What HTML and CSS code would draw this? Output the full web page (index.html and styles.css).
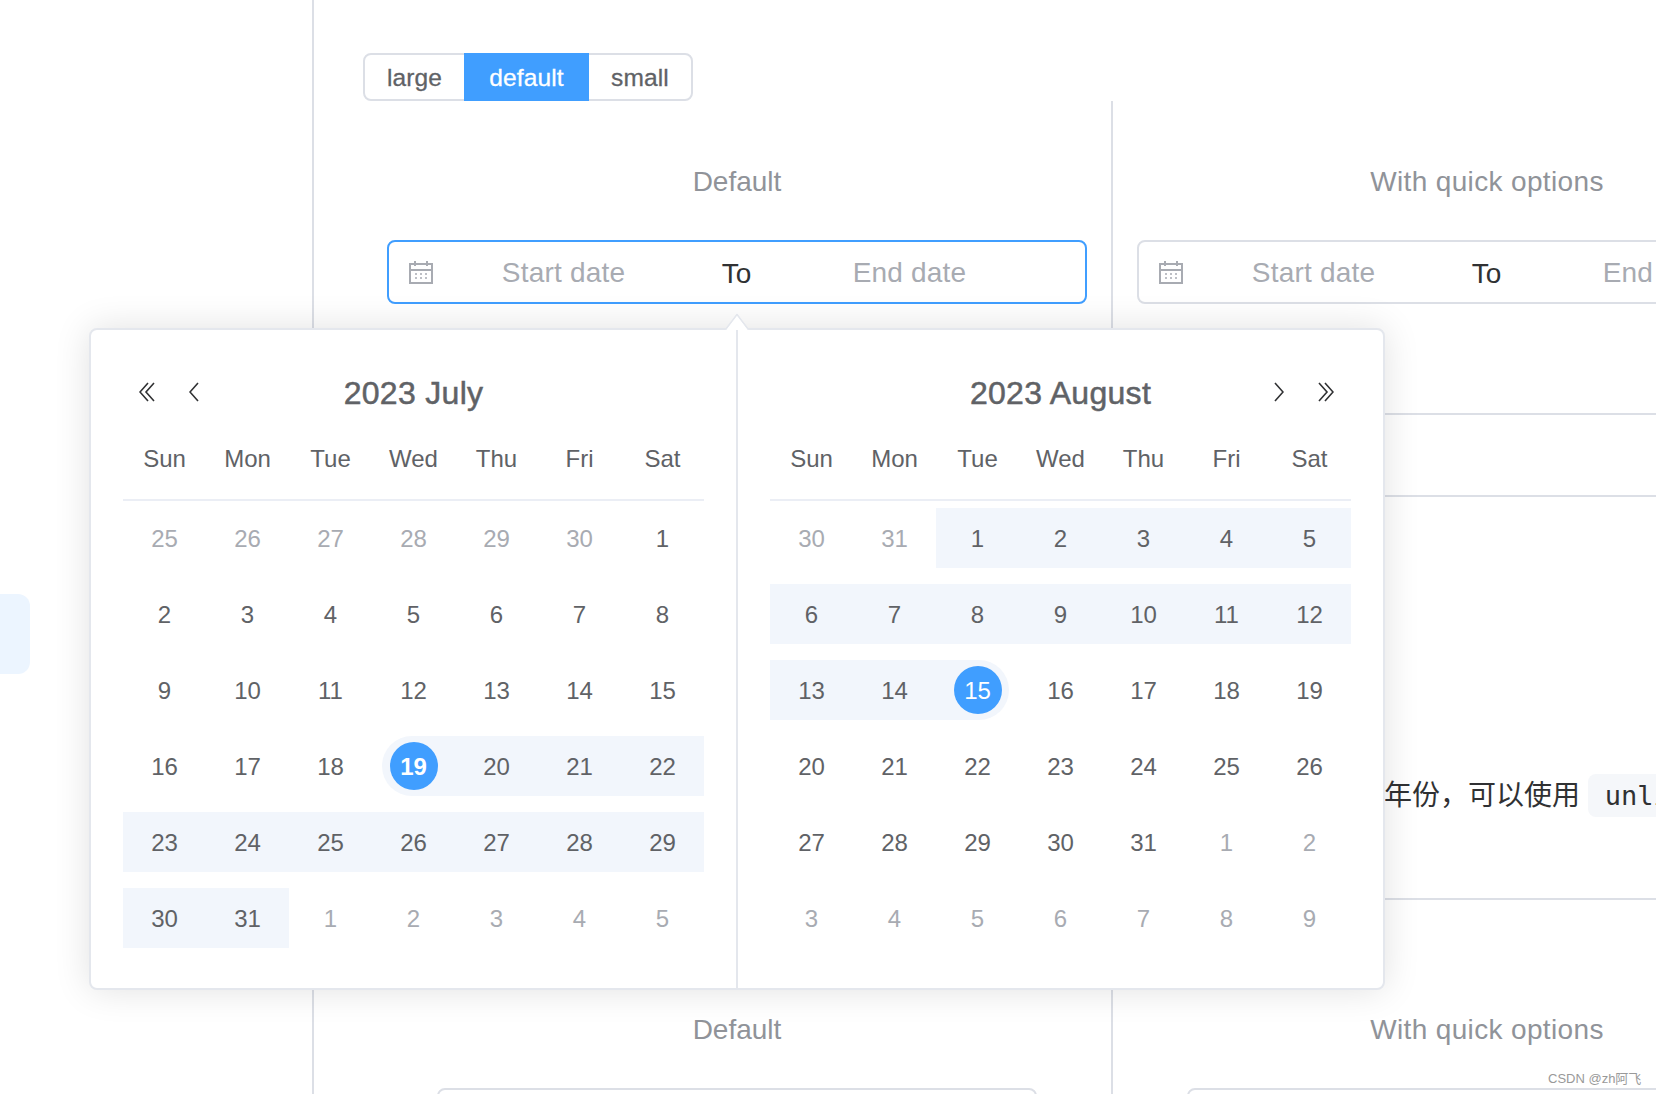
FILE: index.html
```html
<!DOCTYPE html>
<html lang="en">
<head>
  <meta charset="UTF-8" />
  <title>Date Picker</title>
  <link rel="stylesheet" href="styles.css">
</head>
<body>

  <div class="page">
    <div class="sidebar">
      <div class="side_active"></div>
    </div>

    <div class="content">
      <div class="size_group">
        <div class="size_btn size_large">large</div>
        <div class="size_btn size_default active">default</div>
        <div class="size_btn size_small">small</div>
      </div>

      <div class="demo_row">
        <div class="demo_block">
          <div class="demo_label">Default</div>
          <div class="range focus">
            <svg class="cal_icon" viewBox="0 0 24 24"><path d="M1 4h22v19H1zM1 10h22M6 1v5M18 1v5"/><path class="dots" d="M6 14h3M11 14h3M16 14h3M6 18h3M11 18h3M16 18h3"/></svg>
            <span class="range_input">Start date</span>
            <span class="range_sep">To</span>
            <span class="range_input">End date</span>
          </div>
        </div>
        <div class="demo_block">
          <div class="demo_label wide">With quick options</div>
          <div class="range">
            <svg class="cal_icon" viewBox="0 0 24 24"><path d="M1 4h22v19H1zM1 10h22M6 1v5M18 1v5"/><path class="dots" d="M6 14h3M11 14h3M16 14h3M6 18h3M11 18h3M16 18h3"/></svg>
            <span class="range_input">Start date</span>
            <span class="range_sep">To</span>
            <span class="range_input">End date</span>
          </div>
        </div>
      </div>

      <div class="spacer_section"></div>

      <div class="prose_section">
        <p class="prose">年份，可以使用 <code class="inline_code">unlink-panels</code></p>
      </div>

      <div class="demo_row lower">
        <div class="demo_block">
          <div class="demo_label">Default</div>
          <div class="range narrow"></div>
        </div>
        <div class="demo_block">
          <div class="demo_label wide">With quick options</div>
          <div class="range narrow"></div>
        </div>
      </div>
    </div>
  </div>

  <!-- popper, sits over the page -->
  <div class="picker">
    <div class="picker_arrow"></div>

    <div class="month_panel left_panel">
      <div class="month_header">
        <div class="nav_group">
          <svg class="nav_double" viewBox="0 0 16 20"><path d="M9 1 1 10l8 9M15 1l-8 9 8 9"/></svg>
          <svg class="nav_single prev" viewBox="0 0 10 20"><path d="M9 1 1 10l8 9"/></svg>
        </div>
        <div class="month_title">2023 July</div>
        <div class="nav_group"></div>
      </div>
      <div class="week_row">
        <span>Sun</span><span>Mon</span><span>Tue</span><span>Wed</span><span>Thu</span><span>Fri</span><span>Sat</span>
      </div>
      <div class="day_grid">
        <div class="day off"><span>25</span></div><div class="day off"><span>26</span></div><div class="day off"><span>27</span></div><div class="day off"><span>28</span></div><div class="day off"><span>29</span></div><div class="day off"><span>30</span></div><div class="day"><span>1</span></div>
        <div class="day"><span>2</span></div><div class="day"><span>3</span></div><div class="day"><span>4</span></div><div class="day"><span>5</span></div><div class="day"><span>6</span></div><div class="day"><span>7</span></div><div class="day"><span>8</span></div>
        <div class="day"><span>9</span></div><div class="day"><span>10</span></div><div class="day"><span>11</span></div><div class="day"><span>12</span></div><div class="day"><span>13</span></div><div class="day"><span>14</span></div><div class="day"><span>15</span></div>
        <div class="day"><span>16</span></div><div class="day"><span>17</span></div><div class="day"><span>18</span></div><div class="day start"><span>19</span></div><div class="day in_range"><span>20</span></div><div class="day in_range"><span>21</span></div><div class="day in_range"><span>22</span></div>
        <div class="day in_range"><span>23</span></div><div class="day in_range"><span>24</span></div><div class="day in_range"><span>25</span></div><div class="day in_range"><span>26</span></div><div class="day in_range"><span>27</span></div><div class="day in_range"><span>28</span></div><div class="day in_range"><span>29</span></div>
        <div class="day in_range"><span>30</span></div><div class="day in_range"><span>31</span></div><div class="day off"><span>1</span></div><div class="day off"><span>2</span></div><div class="day off"><span>3</span></div><div class="day off"><span>4</span></div><div class="day off"><span>5</span></div>
      </div>
    </div>

    <div class="month_panel">
      <div class="month_header">
        <div class="nav_group"></div>
        <div class="month_title">2023 August</div>
        <div class="nav_group nav_right">
          <svg class="nav_single next" viewBox="0 0 10 20"><path d="M1 1l8 9-8 9"/></svg>
          <svg class="nav_double" viewBox="0 0 16 20"><path d="M1 1l8 9-8 9M7 1l8 9-8 9"/></svg>
        </div>
      </div>
      <div class="week_row">
        <span>Sun</span><span>Mon</span><span>Tue</span><span>Wed</span><span>Thu</span><span>Fri</span><span>Sat</span>
      </div>
      <div class="day_grid">
        <div class="day off"><span>30</span></div><div class="day off"><span>31</span></div><div class="day in_range"><span>1</span></div><div class="day in_range"><span>2</span></div><div class="day in_range"><span>3</span></div><div class="day in_range"><span>4</span></div><div class="day in_range"><span>5</span></div>
        <div class="day in_range"><span>6</span></div><div class="day in_range"><span>7</span></div><div class="day in_range"><span>8</span></div><div class="day in_range"><span>9</span></div><div class="day in_range"><span>10</span></div><div class="day in_range"><span>11</span></div><div class="day in_range"><span>12</span></div>
        <div class="day in_range"><span>13</span></div><div class="day in_range"><span>14</span></div><div class="day end"><span>15</span></div><div class="day"><span>16</span></div><div class="day"><span>17</span></div><div class="day"><span>18</span></div><div class="day"><span>19</span></div>
        <div class="day"><span>20</span></div><div class="day"><span>21</span></div><div class="day"><span>22</span></div><div class="day"><span>23</span></div><div class="day"><span>24</span></div><div class="day"><span>25</span></div><div class="day"><span>26</span></div>
        <div class="day"><span>27</span></div><div class="day"><span>28</span></div><div class="day"><span>29</span></div><div class="day"><span>30</span></div><div class="day"><span>31</span></div><div class="day off"><span>1</span></div><div class="day off"><span>2</span></div>
        <div class="day off"><span>3</span></div><div class="day off"><span>4</span></div><div class="day off"><span>5</span></div><div class="day off"><span>6</span></div><div class="day off"><span>7</span></div><div class="day off"><span>8</span></div><div class="day off"><span>9</span></div>
      </div>
    </div>
  </div>

  <div class="watermark">CSDN @zh阿飞</div>

</body>
</html>
```

FILE: styles.css
```css
body {
  margin: 0;
  padding: 0;
  background-color: #fff;
  font-family: "Liberation Sans", "Noto Sans CJK SC", sans-serif;
  color: #606266;
}

.page {
  display: flex;
  width: 1656px;
  height: 1094px;
  overflow: hidden;
}

.sidebar {
  flex: 0 0 314px;
  box-sizing: border-box;
  padding-top: 594px;
  border-right: 2px solid #dcdfe6;
}

.side_active {
  width: 30px;
  height: 80px;
  background-color: #ecf5ff;
  border-radius: 0 12px 12px 0;
}

.content {
  flex: 0 0 1500px;
  padding: 53px 0 0 49px;
  box-sizing: border-box;
}

/* size switch */
.size_group {
  display: flex;
  width: 330px;
  height: 48px;
  box-sizing: border-box;
  border: 2px solid #dcdfe6;
  border-radius: 8px;
}

.size_btn {
  display: flex;
  align-items: center;
  justify-content: center;
  box-sizing: border-box;
  padding-top: 2px;
  font-size: 24.5px;
  letter-spacing: 0.15px;
  -webkit-text-stroke: 0.3px currentColor;
}

.size_large {
  flex: 0 0 99px;
}

.size_default {
  flex: 0 0 125px;
  margin: -2px 0;
}

.size_small {
  flex: 1;
}

.size_btn.active {
  background-color: #409eff;
  color: white;
}

/* demo blocks */
.demo_row {
  display: flex;
  width: 1500px;
  height: 314px;
  box-sizing: border-box;
  border-bottom: 2px solid #dcdfe6;
}

.demo_block {
  flex: 0 0 750px;
  box-sizing: border-box;
  padding-top: 60px;
  border-right: 2px solid #dcdfe6;
}

.demo_label {
  height: 40px;
  line-height: 42px;
  margin-bottom: 39px;
  text-align: center;
  font-size: 28px;
  color: #909399;
}

.demo_label.wide {
  letter-spacing: 0.35px;
}

.range {
  display: flex;
  align-items: center;
  width: 700px;
  height: 64px;
  box-sizing: border-box;
  margin: 0 auto;
  padding: 2px 0 0 20px;
  border: 2px solid #dcdfe6;
  border-radius: 8px;
  font-size: 28px;
}

.range.focus {
  border-color: #409eff;
}

.range.narrow {
  width: 600px;
}

.cal_icon {
  flex: 0 0 24px;
  height: 24px;
  margin: 0 10px 2px 0;
  fill: none;
  stroke: #a8abb2;
  stroke-width: 2;
}

.cal_icon .dots {
  stroke-width: 1.6;
  stroke-dasharray: 2 1;
}

.range_input {
  flex: 0 0 241px;
  text-align: center;
  color: #a8abb2;
  white-space: nowrap;
  letter-spacing: 0.2px;
}

.range_sep {
  flex: 0 0 105px;
  padding-top: 2px;
  text-align: center;
  color: #303133;
}

.spacer_section {
  height: 82px;
  width: 1500px;
  border-bottom: 2px solid #dcdfe6;
  box-sizing: border-box;
}

.prose_section {
  height: 403px;
  width: 1500px;
  box-sizing: border-box;
  padding: 277px 0 0 1021px;
  border-bottom: 2px solid #dcdfe6;
}

.prose {
  margin: 0;
  line-height: 44px;
  font-size: 28px;
  color: #303133;
  white-space: nowrap;
}

.inline_code {
  display: inline-block;
  padding: 0 17px;
  height: 43px;
  line-height: 43px;
  border-radius: 8px;
  background-color: #f5f7fa;
  font-family: "DejaVu Sans Mono", "Liberation Mono", monospace;
  font-size: 27px;
}

.demo_row.lower {
  height: auto;
  border-bottom: none;
}

.demo_row.lower .demo_block {
  padding-top: 109px;
  height: 300px;
}

/* date picker popper */
.picker {
  position: absolute;
  left: 89px;
  top: 328px;
  display: flex;
  width: 1296px;
  height: 662px;
  box-sizing: border-box;
  background-color: #fff;
  border: 2px solid #e4e7ed;
  border-radius: 8px;
  box-shadow: 0 0 36px rgba(0, 0, 0, 0.12);
}

.picker_arrow {
  position: absolute;
  left: 636px;
  top: -11px;
  width: 20px;
  height: 20px;
  box-sizing: border-box;
  background-color: #fff;
  border-top: 2px solid #e4e7ed;
  border-left: 2px solid #e4e7ed;
  transform: rotate(45deg) skew(8deg, 8deg);
  border-top-left-radius: 2px;
}

.month_panel {
  flex: 1;
  position: relative;
  box-sizing: border-box;
  padding: 33px 32px 32px;
}

.left_panel {
  border-right: 2px solid #e4e7ed;
}

.month_header {
  display: grid;
  grid-template-columns: 1fr auto 1fr;
  align-items: center;
  height: 60px;
}

.month_title {
  font-size: 32px;
  letter-spacing: 0.3px;
  -webkit-text-stroke: 0.5px currentColor;
  text-align: center;
}

.nav_group {
  display: flex;
  align-items: center;
  padding-left: 16px;
}

.nav_right {
  justify-content: flex-end;
  padding: 0 17px 0 0;
}

.nav_group svg {
  height: 20px;
  margin-bottom: 2px;
  fill: none;
  stroke: #303133;
  stroke-width: 1.6;
}

.nav_double {
  width: 16px;
}

.nav_single {
  width: 10px;
}

.nav_single.prev {
  margin-left: 34px;
}

.nav_single.next {
  margin-right: 34px;
}

.week_row {
  display: grid;
  grid-template-columns: repeat(7, 1fr);
  height: 60px;
  line-height: 62px;
  margin-top: 5px;
  padding-bottom: 11px;
  border-bottom: 2px solid #ebeef5;
  text-align: center;
  font-size: 24px;
}

.day_grid {
  display: grid;
  grid-template-columns: repeat(7, 1fr);
  grid-auto-rows: 60px;
  row-gap: 16px;
  margin-top: 7px;
}

.day {
  position: relative;
  display: flex;
  align-items: center;
  justify-content: center;
  font-size: 24px;
  padding-top: 2px;
}

.day span {
  position: relative;
}

.day.off {
  color: #a8abb2;
}

.day.in_range {
  background-color: #f2f6fc;
}

.day.start::before,
.day.end::before {
  content: "";
  position: absolute;
  top: 0;
  bottom: 0;
  background-color: #f2f6fc;
}

.day.start::before {
  left: 10px;
  right: 0;
  border-radius: 30px 0 0 30px;
}

.day.end::before {
  left: 0;
  right: 10px;
  border-radius: 0 30px 30px 0;
}

.day.start,
.day.end {
  padding-top: 0;
}

.day.start span,
.day.end span {
  width: 48px;
  height: 48px;
  line-height: 50px;
  text-align: center;
  border-radius: 50%;
  background-color: #409eff;
  color: white;
}

.day.start span {
  font-weight: bold;
}

.watermark {
  position: absolute;
  left: 1548px;
  top: 1071px;
  font-size: 13px;
  line-height: 16px;
  color: #999;
}
```
